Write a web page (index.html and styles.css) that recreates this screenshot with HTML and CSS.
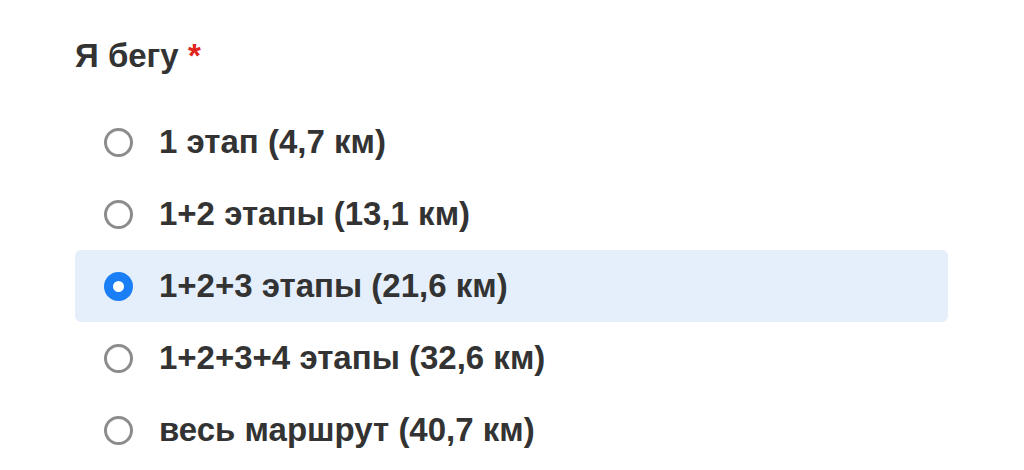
FILE: index.html
```html
<!DOCTYPE html>
<html lang="ru">
<head>
    <meta charset="UTF-8">
    <meta name="viewport" content="width=device-width, initial-scale=1.0">
    <title>Я бегу</title>
    <link rel="stylesheet" href="styles.css">
</head>
<body>
    <div class="field">
        <div class="field-label">Я бегу <span class="required">*</span></div>
        <div class="options">
            <label class="option">
                <input type="radio" name="distance" value="1">
                <span class="radio"></span>
                <span class="option-text">1 этап (4,7 км)</span>
            </label>
            <label class="option">
                <input type="radio" name="distance" value="2">
                <span class="radio"></span>
                <span class="option-text">1+2 этапы (13,1 км)</span>
            </label>
            <label class="option">
                <input type="radio" name="distance" value="3" checked>
                <span class="radio"></span>
                <span class="option-text">1+2+3 этапы (21,6 км)</span>
            </label>
            <label class="option">
                <input type="radio" name="distance" value="4">
                <span class="radio"></span>
                <span class="option-text">1+2+3+4 этапы (32,6 км)</span>
            </label>
            <label class="option">
                <input type="radio" name="distance" value="5">
                <span class="radio"></span>
                <span class="option-text">весь маршрут (40,7 км)</span>
            </label>
        </div>
    </div>
</body>
</html>
```

FILE: styles.css
```css
*{
    box-sizing: border-box;
    margin: 0;
    padding: 0;
    font-family: "Liberation Sans", Arial, Helvetica, sans-serif;
}
body{
    background: #fff;
    color: #333;
}
.field{
    padding: 36px 76px 0 75px;
}
.field-label{
    font-size: 33px;
    font-weight: bold;
    line-height: 40px;
    color: #333;
}
.required{
    color: #e2231a;
}
.options{
    margin-top: 30px;
    display: flex;
    flex-direction: column;
}
.option{
    display: flex;
    align-items: center;
    height: 72px;
    padding-left: 29px;
    gap: 26px;
    border-radius: 6px;
    cursor: pointer;
}
.option input{
    display: none;
}
.radio{
    width: 29px;
    height: 29px;
    border: 3px solid #8c8c8c;
    border-radius: 50%;
    flex-shrink: 0;
}
.option-text{
    font-size: 33px;
    font-weight: bold;
    color: #333;
}
.option:has(input:checked){
    background: #e5effb;
}
.option input:checked + .radio{
    border: 9px solid #1a7ef6;
    background: #fff;
}
```
